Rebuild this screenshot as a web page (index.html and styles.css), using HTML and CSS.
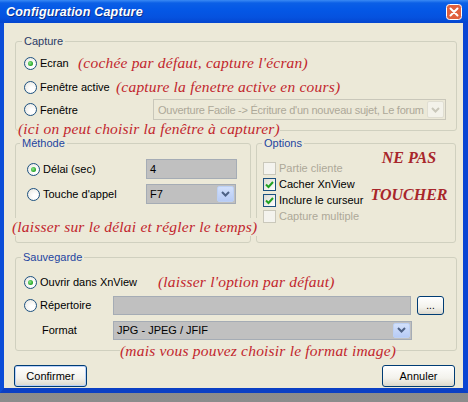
FILE: index.html
```html
<!DOCTYPE html>
<html lang="fr">
<head>
<meta charset="utf-8">
<title>Configuration Capture</title>
<link rel="stylesheet" href="styles.css">
</head>
<body>
<div class="window">
  <div class="titlebar">
    <span class="title">Configuration Capture</span>
    <span class="close"><svg width="16" height="16" viewBox="0 0 16 16"><rect x="0.5" y="0.5" width="15" height="15" rx="3" fill="#e0603e" stroke="#ffffff"/><path d="M4.5 4.5 L11.5 11.5 M11.5 4.5 L4.5 11.5" stroke="#ffffff" stroke-width="2" stroke-linecap="round"/></svg></span>
  </div>
  <div class="frame">
    <div class="client">
      <fieldset class="group capture">
        <legend class="lg-capture">Capture</legend>
        <div class="gbody capture-body">
          <div class="row h24"><span class="opt w-ecran"><span class="radio on"></span><span>Ecran</span></span><span class="note">(cochée par défaut, capture l'écran)</span></div>
          <div class="row h24"><span class="opt w-active"><span class="radio"></span><span>Fenêtre active</span></span><span class="note">(capture la fenetre active en cours)</span></div>
          <div class="row h21"><span class="opt w-win"><span class="radio"></span><span>Fenêtre</span></span>
            <div class="combo disabled w-winsel"><span class="val tight">Ouverture Facile -&gt; Écriture d'un nouveau sujet, Le forum</span><span class="arrow"><svg width="9" height="6" viewBox="0 0 9 6"><path d="M1 1 L4.5 4.5 L8 1" fill="none" stroke="#c9c7ba" stroke-width="2"/></svg></span></div>
          </div>
          <div class="note block n-win">(ici on peut choisir la fenêtre à capturer)</div>
        </div>
      </fieldset>

      <div class="split">
        <fieldset class="group">
          <legend class="lg-methode">Méthode</legend>
          <div class="gbody methode-body">
            <div class="row h20"><span class="opt w-delai"><span class="radio on"></span><span>Délai (sec)</span></span><div class="field w-delay">4</div></div>
            <div class="row h20 mt5"><span class="opt w-delai"><span class="radio"></span><span>Touche d'appel</span></span>
              <div class="combo w-key"><span class="val">F7</span><span class="arrow"><svg width="9" height="6" viewBox="0 0 9 6"><path d="M1 1 L4.5 4.5 L8 1" fill="none" stroke="#4d6185" stroke-width="2"/></svg></span></div>
            </div>
            <div class="note block n-methode">(laisser sur le délai et régler le temps)</div>
          </div>
        </fieldset>
        <fieldset class="group">
          <legend class="lg-options">Options</legend>
          <div class="gbody options-body">
            <div class="checks">
              <div class="check dis"><span class="box"></span><span>Partie cliente</span></div>
              <div class="check"><span class="box"><svg width="11" height="11" viewBox="0 0 11 11"><path d="M2 5.5 L4.5 8 L9 3" fill="none" stroke="#21a121" stroke-width="2"/></svg></span><span>Cacher XnView</span></div>
              <div class="check"><span class="box"><svg width="11" height="11" viewBox="0 0 11 11"><path d="M2 5.5 L4.5 8 L9 3" fill="none" stroke="#21a121" stroke-width="2"/></svg></span><span>Inclure le curseur</span></div>
              <div class="check dis"><span class="box"></span><span>Capture multiple</span></div>
            </div>
            <div class="stamp">
              <div>NE PAS</div>
              <div class="stamp2">TOUCHER</div>
            </div>
          </div>
        </fieldset>
      </div>

      <fieldset class="group sauve">
        <legend class="lg-sauve">Sauvegarde</legend>
        <div class="gbody sauve-body">
          <div class="row h20"><span class="opt w-ouvrir"><span class="radio on"></span><span>Ouvrir dans XnView</span></span><span class="note">(laisser l'option par défaut)</span></div>
          <div class="row h20 mt3"><span class="opt w-rep"><span class="radio"></span><span>Répertoire</span></span><div class="field w-dir"></div><span class="btn small">...</span></div>
          <div class="row h20 mt5"><span class="opt w-rep fmt">Format</span>
            <div class="combo w-fmt"><span class="val">JPG - JPEG / JFIF</span><span class="arrow"><svg width="9" height="6" viewBox="0 0 9 6"><path d="M1 1 L4.5 4.5 L8 1" fill="none" stroke="#4d6185" stroke-width="2"/></svg></span></div>
          </div>
          <div class="note block n-sauve">(mais vous pouvez choisir le format image)</div>
        </div>
      </fieldset>

      <div class="buttons">
        <span class="btn main default">Confirmer</span>
        <span class="btn main">Annuler</span>
      </div>
    </div>
  </div>
</div>
</body>
</html>
```

FILE: styles.css
```css
html, body {
  margin: 0;
  padding: 0;
}
body {
  width: 468px;
  height: 402px;
  overflow: hidden;
  background: linear-gradient(#6a6a6a, #8c8c8c);
  font: 11px "Liberation Sans", Arial, sans-serif;
  color: #000;
}
.window {
  height: 393px;
  display: flex;
  flex-direction: column;
}
.titlebar {
  height: 23px;
  flex: none;
  display: flex;
  align-items: center;
  justify-content: space-between;
  padding: 0 6px 0 6px;
  background: linear-gradient(#3a8af4 0, #0b5fe6 3px, #0458e6 40%, #0552df 75%, #0446cf 100%);
}
.title {
  color: #fff;
  font: italic bold 12.5px "Liberation Sans", Arial, sans-serif;
  letter-spacing: 0.2px;
  text-shadow: 1px 1px 0 #0a2f8a;
}
.close {
  display: flex;
  margin-top: 1px;
}
.frame {
  flex: 1;
  display: flex;
  border-left: 4px solid #0b4dd8;
  border-right: 5px solid #0a45d3;
  border-bottom: 5px solid #0b3fc4;
}
.client {
  flex: 1;
  background: #ece9d8;
  padding: 11px 6px 0 11px;
}
.group {
  margin: 0;
  padding: 0;
  border: 1px solid #d0d0bf;
  border-radius: 3px;
  min-width: 0;
}
.group legend {
  padding: 0 2px;
  line-height: 14px;
  height: 14px;
  color: #1e45a0;
}
.lg-capture { margin-left: 6px; color: #2a3a66 !important; }
.lg-methode { margin-left: 4px; }
.lg-options { margin-left: 5px; }
.lg-sauve { margin-left: 5px; }

.row {
  display: flex;
  align-items: center;
}
.h24 { height: 24px; }
.h21 { height: 21px; }
.h20 { height: 20px; }
.mt3 { margin-top: 3px; }
.mt5 { margin-top: 5px; }

.opt {
  display: flex;
  align-items: center;
  flex: none;
}
.w-ecran { width: 54px; }
.w-active { width: 92px; }
.w-win { width: 129px; }
.w-delai { width: 119px; }
.w-ouvrir { width: 134px; }
.w-rep { width: 89px; }
.fmt { padding-left: 18px; box-sizing: border-box; }

.radio {
  width: 11px;
  height: 11px;
  border: 1px solid #1c5180;
  border-radius: 50%;
  background: radial-gradient(circle at 65% 65%, #ffffff 20%, #e6e4dc 100%);
  margin-right: 3px;
  position: relative;
  flex: none;
}
.radio.on::after {
  content: "";
  position: absolute;
  left: 3px;
  top: 3px;
  width: 5px;
  height: 5px;
  border-radius: 50%;
  background: radial-gradient(circle at 40% 40%, #8ee88e, #21a121 70%);
}

.note {
  font: italic 15.5px "Liberation Serif", "Times New Roman", serif;
  color: #c2262d;
  line-height: 18px;
  white-space: nowrap;
  letter-spacing: 0.2px;
}
.note.block {
  display: block;
  width: max-content;
  background: #ece9d8;
  position: relative;
}

.capture-body { padding: 3px 0 0 8px; }
.n-win { margin: 0 0 -7px -6px; line-height: 17px; }

.combo {
  display: flex;
  align-items: stretch;
  box-sizing: border-box;
  border: 1px solid #a5acb5;
  background: #c0c0c0;
  overflow: hidden;
}
.combo .val {
  flex: 1;
  padding: 0 3px;
  display: flex;
  align-items: center;
  white-space: nowrap;
  overflow: hidden;
}
.combo .val.tight {
  letter-spacing: -0.25px;
  padding-left: 4px;
}
.combo .arrow {
  width: 15px;
  margin: 1px;
  flex: none;
  display: flex;
  align-items: center;
  justify-content: center;
  border: 1px solid #bcd0f4;
  border-radius: 2px;
  background: linear-gradient(#d2e0fb, #b7cbf5);
}
.combo.disabled {
  background: #ece9d8;
  border-color: #c9c7ba;
  color: #aca899;
}
.combo.disabled .arrow {
  background: #f3f2ea;
  border-color: #e0ded2;
}
.w-winsel { width: 293px; height: 21px; }
.w-key { width: 90px; height: 20px; }
.w-fmt { width: 299px; height: 19px; }

.field {
  box-sizing: border-box;
  border: 1px solid #a5acb5;
  background: #c0c0c0;
  padding: 0 3px;
  display: flex;
  align-items: center;
}
.w-delay { width: 91px; height: 20px; }
.w-dir { width: 298px; height: 19px; }

.split {
  display: grid;
  grid-template-columns: 236px 200px;
  column-gap: 5px;
  margin: 5px 0 7px;
}
.methode-body { padding: 9px 0 6px 11px; }
.n-methode { margin: 14px 0 0 -15px; }

.options-body {
  display: flex;
  padding-left: 6px;
}
.checks {
  width: 102px;
  margin-top: 10px;
}
.check {
  height: 16px;
  display: flex;
  align-items: center;
  white-space: nowrap;
}
.check .box {
  width: 11px;
  height: 11px;
  border: 1px solid #1c5180;
  background: linear-gradient(135deg, #dcdad2, #ffffff);
  margin-right: 3px;
  flex: none;
  display: flex;
}
.check.dis { color: #aca899; }
.check.dis .box {
  border-color: #cac8bb;
  background: #f4f3ee;
}
.stamp {
  width: 88px;
  text-align: center;
  font: italic bold 16px "Liberation Serif", "Times New Roman", serif;
  color: #a8262b;
  line-height: 16px;
}
.stamp2 { margin-top: 21px; }

.sauve-body { padding: 8px 0 0 8px; }
.n-sauve { margin: 2px 0 -10px 96px; }

.btn {
  box-sizing: border-box;
  display: flex;
  align-items: center;
  justify-content: center;
  border: 1px solid #003c74;
  border-radius: 3px;
  background: linear-gradient(#ffffff, #f3f2ec 60%, #dcd8cc);
}
.btn.small {
  width: 27px;
  height: 19px;
  margin-left: 6px;
  font-size: 10px;
}
.btn.main {
  width: 73px;
  height: 22px;
}
.btn.default {
  box-shadow: inset 0 0 0 1px #b9d1fa;
}
.buttons {
  display: flex;
  justify-content: space-between;
  margin-top: 14px;
  padding-right: 2px;
  margin-left: -1px;
}
```
